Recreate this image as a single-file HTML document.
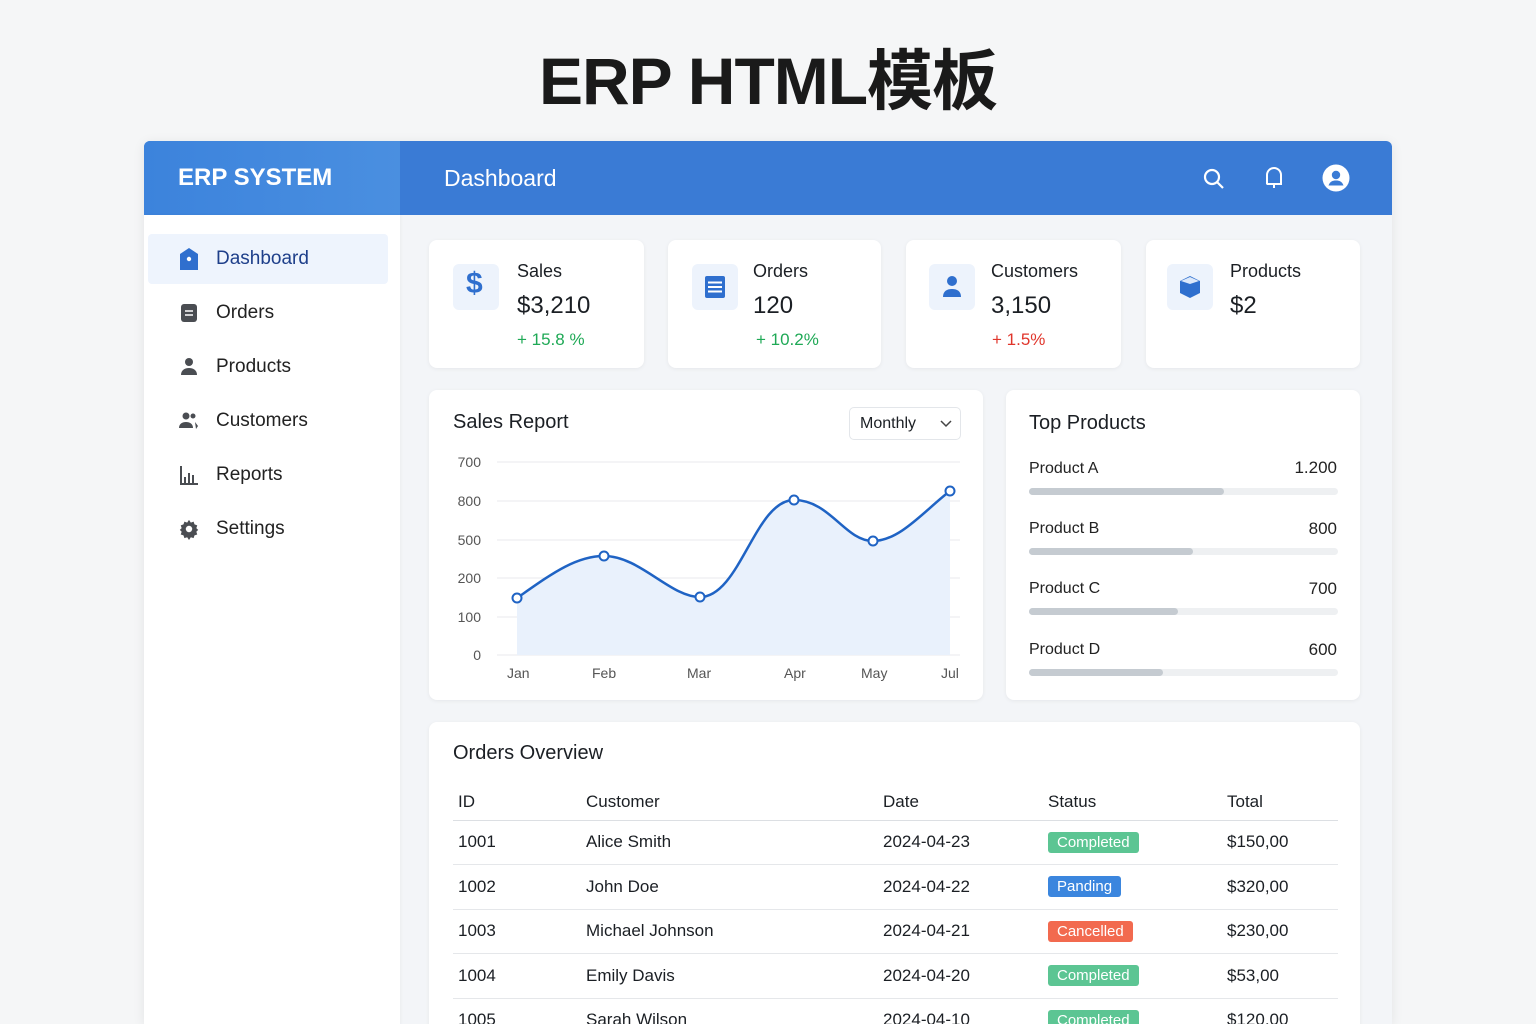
<!DOCTYPE html>
<html><head><meta charset="utf-8"><style>
*{margin:0;padding:0;box-sizing:border-box}
body{width:1536px;height:1024px;overflow:hidden;background:#f5f6f7;font-family:"Liberation Sans","Noto Sans CJK SC",sans-serif;color:#1b1f24;position:relative}
.a{position:absolute}
h1{position:absolute;left:0;width:1536px;top:28px;text-align:center;font-size:66px;font-weight:700;color:#1a1a1a;letter-spacing:-1px;font-family:"Liberation Sans","Noto Sans CJK SC",sans-serif}
.frame{position:absolute;left:144px;top:141px;width:1248px;height:883px;background:#f3f5f8;border-radius:6px 6px 0 0;box-shadow:0 2px 12px rgba(0,0,0,.08);overflow:hidden}
.hdr{position:absolute;left:0;top:0;width:1248px;height:74px;background:#3a7bd5}
.hl{position:absolute;left:0;top:0;width:256px;height:74px;background:linear-gradient(90deg,#3c83dc,#4a8fe0)}
.side{position:absolute;left:0;top:74px;width:256px;height:810px;background:#fff;box-shadow:1px 0 3px rgba(0,0,0,.04)}
.nav{position:absolute;left:0;width:256px;height:50px;font-size:19px;color:#222}
.nav span{position:absolute;left:72px;top:14px}
.nav svg{position:absolute;left:34px;top:13px}
.card{position:absolute;background:#fff;border-radius:8px;box-shadow:0 1px 4px rgba(0,0,0,.06)}
.ib{position:absolute;left:24px;top:24px;width:46px;height:46px;background:#edf3fc;border-radius:6px}
.ct{position:absolute;left:88px;top:21px;font-size:18px}
.cv{position:absolute;left:88px;top:52px;font-size:24px}
.cp{position:absolute;left:88px;top:90px;font-size:17px}
.yl{position:absolute;left:0;width:52px;text-align:right;font-size:14px;color:#555}
.ml{position:absolute;top:275px;font-size:14px;color:#555}
.pn{position:absolute;left:23px;font-size:16px;color:#222}
.pv{position:absolute;right:23px;font-size:17px;color:#222}
.bar{position:absolute;left:23px;width:309px;height:7px;background:#eef0f2;border-radius:4px}
.bar i{display:block;height:7px;background:#c5cbd1;border-radius:4px}
td,th{font-size:17px;font-weight:400;text-align:left;height:44.5px;border-bottom:1px solid #e5e7ea;padding-left:5px}
th{height:42px;border-bottom:1.5px solid #dcdfe3;padding-top:6px}
table{position:absolute;left:24px;top:56px;width:885px;border-collapse:collapse}
.b{display:inline-block;color:#fff;font-size:15px;padding:2px 9px;border-radius:3px}
.g{background:#5cc593}.bl{background:#3b86de}.r{background:#f26a4f}
</style></head><body>
<h1>ERP HTML模板</h1>
<div class="frame">
 <div class="hdr"><div class="hl"></div>
  <div class="a" style="left:34px;top:23px;font-size:24px;font-weight:700;color:#fff">ERP SYSTEM</div>
  <div class="a" style="left:300px;top:24px;font-size:23px;color:#fff">Dashboard</div>
  <svg class="a" style="left:1058px;top:26px" width="24" height="24" viewBox="0 0 24 24" fill="none" stroke="#fff" stroke-width="2.2"><circle cx="10" cy="10" r="7"/><path d="M15 15l6 6"/></svg>
  <svg class="a" style="left:1119px;top:24px" width="22" height="26" viewBox="0 0 22 26" fill="none" stroke="#fff" stroke-width="2"><path d="M4 19V10a7 7 0 0114 0v9H3.5h15M11 19v4"/></svg>
  <svg class="a" style="left:1178px;top:23px" width="28" height="28" viewBox="0 0 28 28"><circle cx="14" cy="14" r="13.5" fill="#fff"/><circle cx="14" cy="11" r="4.2" fill="#3a7bd5"/><path d="M6.5 21.5c1.5-4 4-5 7.5-5s6 1 7.5 5" fill="#3a7bd5"/></svg>
 </div>
 <div class="side">
  <div class="a" style="left:4px;top:19px;width:240px;height:50px;background:#eef4fd;border-radius:4px"></div>
  <div class="nav" style="top:19px;color:#1e3f8a"><svg width="22" height="24" viewBox="0 0 22 24"><path d="M2 7l9-6 9 6v16H2z" fill="#2f6fce"/><circle cx="11" cy="12" r="2.2" fill="#fff"/></svg><span>Dashboard</span></div>
  <div class="nav" style="top:73px"><svg width="22" height="24" viewBox="0 0 22 24"><rect x="3" y="3" width="16" height="18" rx="3" fill="#4a4d52"/><path d="M7 10h8M7 14h8" stroke="#fff" stroke-width="1.5"/></svg><span>Orders</span></div>
  <div class="nav" style="top:127px"><svg width="22" height="24" viewBox="0 0 22 24"><circle cx="11" cy="7" r="4" fill="#4a4d52"/><path d="M3 20c0-5 4-7 8-7s8 2 8 7z" fill="#4a4d52"/></svg><span>Products</span></div>
  <div class="nav" style="top:181px"><svg width="22" height="24" viewBox="0 0 22 24"><circle cx="8" cy="7" r="3.5" fill="#4a4d52"/><path d="M1 19c0-4 3-6 7-6s7 2 7 6z" fill="#4a4d52"/><circle cx="15" cy="7" r="2.5" fill="#4a4d52"/><path d="M17 13l3 4-2 3z" fill="#4a4d52"/></svg><span>Customers</span></div>
  <div class="nav" style="top:235px"><svg width="22" height="24" viewBox="0 0 22 24" fill="none" stroke="#4a4d52" stroke-width="2"><path d="M3 3v18h17M7 20v-6M11 20v-10M15 20v-8"/></svg><span>Reports</span></div>
  <div class="nav" style="top:289px"><svg width="22" height="24" viewBox="0 0 24 24"><path d="M12 2l2 3 3-1 1 3 3 1-1 3 2 2-2 2 1 3-3 1-1 3-3-1-2 3-2-3-3 1-1-3-3-1 1-3-2-2 2-2-1-3 3-1 1-3 3 1z" fill="#4a4d52"/><circle cx="12" cy="12" r="3.5" fill="#fff"/></svg><span>Settings</span></div>
 </div>

 <div class="card" style="left:285px;top:99px;width:215px;height:128px"><div class="ib"><div class="a" style="left:13px;top:3px;font-size:30px;font-weight:700;color:#2f6fce">$</div></div><div class="ct">Sales</div><div class="cv">$3,210</div><div class="cp" style="color:#1fa956">+ 15.8 %</div></div>
 <div class="card" style="left:524px;top:99px;width:213px;height:128px"><div class="ib"><svg class="a" style="left:12px;top:11px" width="22" height="24" viewBox="0 0 22 24"><rect x="1" y="1" width="20" height="22" rx="2" fill="#2f6fce"/><path d="M4 7.5h14M4 12h14M4 16.5h14" stroke="#fff" stroke-width="2"/></svg></div><div class="ct" style="left:85px">Orders</div><div class="cv" style="left:85px">120</div><div class="cp" style="left:88px;color:#1fa956">+ 10.2%</div></div>
 <div class="card" style="left:762px;top:99px;width:215px;height:128px"><div class="ib" style="left:23px"><svg class="a" style="left:12px;top:10px" width="22" height="26" viewBox="0 0 22 26"><circle cx="11" cy="7" r="5" fill="#2f6fce"/><path d="M2 23c0-6 4-8 9-8s9 2 9 8z" fill="#2f6fce"/></svg></div><div class="ct" style="left:85px">Customers</div><div class="cv" style="left:85px">3,150</div><div class="cp" style="left:86px;color:#e0352b">+ 1.5%</div></div>
 <div class="card" style="left:1002px;top:99px;width:214px;height:128px"><div class="ib" style="left:21px"><svg class="a" style="left:12px;top:11px" width="22" height="24" viewBox="0 0 22 24"><path d="M11 1l10 5v12l-10 5-10-5V6z" fill="#2f6fce"/><path d="M2 6l9-4 9 4-9 3z" fill="#dce8fa"/></svg></div><div class="ct" style="left:84px">Products</div><div class="cv" style="left:84px">$2</div></div>

 <div class="card" style="left:285px;top:249px;width:554px;height:310px;overflow:hidden">
  <div class="a" style="left:24px;top:21px;font-size:20px">Sales Report</div>
  <div class="a" style="left:420px;top:17px;width:112px;height:33px;border:1px solid #e3e6ea;border-radius:5px;font-size:16px;padding:7px 0 0 10px">Monthly<svg class="a" style="left:90px;top:12px" width="12" height="8" viewBox="0 0 12 8" fill="none" stroke="#444" stroke-width="1.5"><path d="M1 1l5 5 5-5"/></svg></div>
  <div class="yl" style="top:64px">700</div><div class="yl" style="top:103px">800</div><div class="yl" style="top:142px">500</div><div class="yl" style="top:180px">200</div><div class="yl" style="top:219px">100</div><div class="yl" style="top:257px">0</div>
  <svg class="a" style="left:0;top:0" width="554" height="310" viewBox="429 390 554 310">
   <path d="M497 462H960M497 501H960M497 540H960M497 578H960M497 617H960M497 655H960" stroke="#e8eaed" stroke-width="1" fill="none"/>
   <path d="M517,598 C550,575 575,556 604,556 C640,556 670,597 700,597 C740,597 755,500 794,500 C830,500 845,541 873,541 C900,541 925,510 950,491 L950,655 L517,655Z" fill="#e9f1fc"/>
   <path d="M517,598 C550,575 575,556 604,556 C640,556 670,597 700,597 C740,597 755,500 794,500 C830,500 845,541 873,541 C900,541 925,510 950,491" fill="none" stroke="#1f63c4" stroke-width="2.5"/>
   <g fill="#fff" stroke="#1f63c4" stroke-width="2"><circle cx="517" cy="598" r="4.5"/><circle cx="604" cy="556" r="4.5"/><circle cx="700" cy="597" r="4.5"/><circle cx="794" cy="500" r="4.5"/><circle cx="873" cy="541" r="4.5"/><circle cx="950" cy="491" r="4.5"/></g>
  </svg>
  <div class="ml" style="left:78px">Jan</div><div class="ml" style="left:163px">Feb</div><div class="ml" style="left:258px">Mar</div><div class="ml" style="left:355px">Apr</div><div class="ml" style="left:432px">May</div><div class="ml" style="left:512px">Jul</div>
 </div>

 <div class="card" style="left:862px;top:249px;width:354px;height:310px">
  <div class="a" style="left:23px;top:22px;font-size:20px">Top Products</div>
  <div class="pn" style="top:70px">Product A</div><div class="pv" style="top:68px">1.200</div><div class="bar" style="top:98px"><i style="width:195px"></i></div>
  <div class="pn" style="top:130px">Product B</div><div class="pv" style="top:129px">800</div><div class="bar" style="top:158px"><i style="width:164px"></i></div>
  <div class="pn" style="top:190px">Product C</div><div class="pv" style="top:189px">700</div><div class="bar" style="top:218px"><i style="width:149px"></i></div>
  <div class="pn" style="top:251px">Product D</div><div class="pv" style="top:250px">600</div><div class="bar" style="top:279px"><i style="width:134px"></i></div>
 </div>

 <div class="card" style="left:285px;top:581px;width:931px;height:340px">
  <div class="a" style="left:24px;top:20px;font-size:20px">Orders Overview</div>
  <table>
   <tr><th style="width:128px">ID</th><th style="width:297px">Customer</th><th style="width:165px">Date</th><th style="width:179px">Status</th><th>Total</th></tr>
   <tr><td>1001</td><td>Alice Smith</td><td>2024-04-23</td><td><span class="b g">Completed</span></td><td>$150,00</td></tr>
   <tr><td>1002</td><td>John Doe</td><td>2024-04-22</td><td><span class="b bl">Panding</span></td><td>$320,00</td></tr>
   <tr><td>1003</td><td>Michael Johnson</td><td>2024-04-21</td><td><span class="b r">Cancelled</span></td><td>$230,00</td></tr>
   <tr><td>1004</td><td>Emily Davis</td><td>2024-04-20</td><td><span class="b g">Completed</span></td><td>$53,00</td></tr>
   <tr><td>1005</td><td>Sarah Wilson</td><td>2024-04-10</td><td><span class="b g">Completed</span></td><td>$120,00</td></tr>
  </table>
 </div>
</div>
</body></html>
